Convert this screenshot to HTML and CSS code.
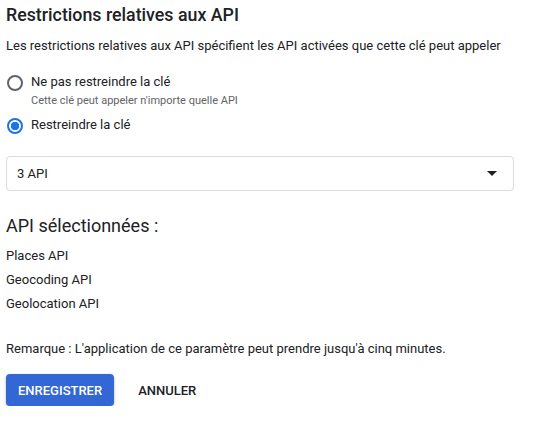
FILE: index.html
```html
<!DOCTYPE html>
<html lang="fr">
<head>
    <meta charset="UTF-8">
    <meta name="viewport" content="width=device-width, initial-scale=1.0">
    <title>Restrictions relatives aux API</title>
    <link rel="stylesheet" href="styles.css">
</head>
<body>
    <div class="panel">
        <h2 class="title">Restrictions relatives aux API</h2>
        <p class="desc">Les restrictions relatives aux API spécifient les API activées que cette clé peut appeler</p>

        <div class="radioGroup">
            <label class="radioRow">
                <span class="radio"></span>
                <span class="radioText">
                    Ne pas restreindre la clé
                    <span class="hint">Cette clé peut appeler n'importe quelle API</span>
                </span>
            </label>
            <label class="radioRow">
                <span class="radio checked"></span>
                <span class="radioText">Restreindre la clé</span>
            </label>
        </div>

        <div class="selectBox">
            <span>3 API</span>
            <span class="arrow"></span>
        </div>

        <h3 class="subtitle">API sélectionnées :</h3>
        <ul class="apiList">
            <li>Places API</li>
            <li>Geocoding API</li>
            <li>Geolocation API</li>
        </ul>

        <p class="note">Remarque : L'application de ce paramètre peut prendre jusqu'à cinq minutes.</p>

        <div class="actions">
            <button class="btnSave">ENREGISTRER</button>
            <button class="btnCancel">ANNULER</button>
        </div>
    </div>
</body>
</html>
```

FILE: styles.css
```css
body {
    margin: 0;
    font-family: Roboto, "Liberation Sans", Arial, sans-serif;
    color: #202124;
    background-color: #ffffff;
}

.panel {
    padding: 0 6px;
    width: 508px;
}

.title {
    margin: 0;
    padding-top: 3px;
    font-size: 17.8px;
    font-weight: 500;
    line-height: 24px;
}

.desc {
    margin: 9px 0 0;
    font-size: 13px;
    line-height: 20px;
}

.radioGroup {
    margin-top: 16px;
}

.radioRow {
    display: flex;
    align-items: flex-start;
    margin-bottom: 5px;
}

.radio {
    box-sizing: border-box;
    width: 16px;
    height: 16px;
    margin: 3px 8px 0 1px;
    border: 2px solid #5f6368;
    border-radius: 50%;
    flex-shrink: 0;
}

.radio.checked {
    border-color: #1a73e8;
    background: radial-gradient(circle, #1a73e8 0 4px, transparent 4.5px);
}

.radioText {
    font-size: 13px;
    line-height: 20px;
}

.hint {
    display: block;
    font-size: 11px;
    line-height: 18px;
    color: #5f6368;
}

.selectBox {
    display: flex;
    align-items: center;
    justify-content: space-between;
    box-sizing: border-box;
    margin-top: 21px;
    height: 35px;
    padding: 0 16px 0 10px;
    border: 1px solid #dadce0;
    border-radius: 4px;
    font-size: 13px;
}

.arrow {
    width: 0;
    height: 0;
    border-left: 5px solid transparent;
    border-right: 5px solid transparent;
    border-top: 5px solid #202124;
}

.subtitle {
    margin: 23px 0 0;
    font-size: 18px;
    font-weight: 400;
    line-height: 24px;
}

.apiList {
    list-style: none;
    margin: 6px 0 0;
    padding: 0;
    font-size: 13px;
}

.apiList li {
    line-height: 24px;
}

.note {
    margin: 23px 0 0;
    font-size: 13px;
    line-height: 20px;
}

.actions {
    display: flex;
    align-items: center;
    gap: 8px;
    margin-top: 15px;
}

button {
    font-family: inherit;
    font-size: 13px;
    font-weight: 500;
    border: none;
    cursor: pointer;
}

.btnSave {
    height: 32px;
    padding: 0 12px;
    border-radius: 4px;
    color: #ffffff;
    background-color: #3367d6;
    box-shadow: 0 1px 3px rgba(0, 0, 0, 0.3);
}

.btnCancel {
    height: 32px;
    padding: 0 16px;
    color: #202124;
    background-color: transparent;
}
```
